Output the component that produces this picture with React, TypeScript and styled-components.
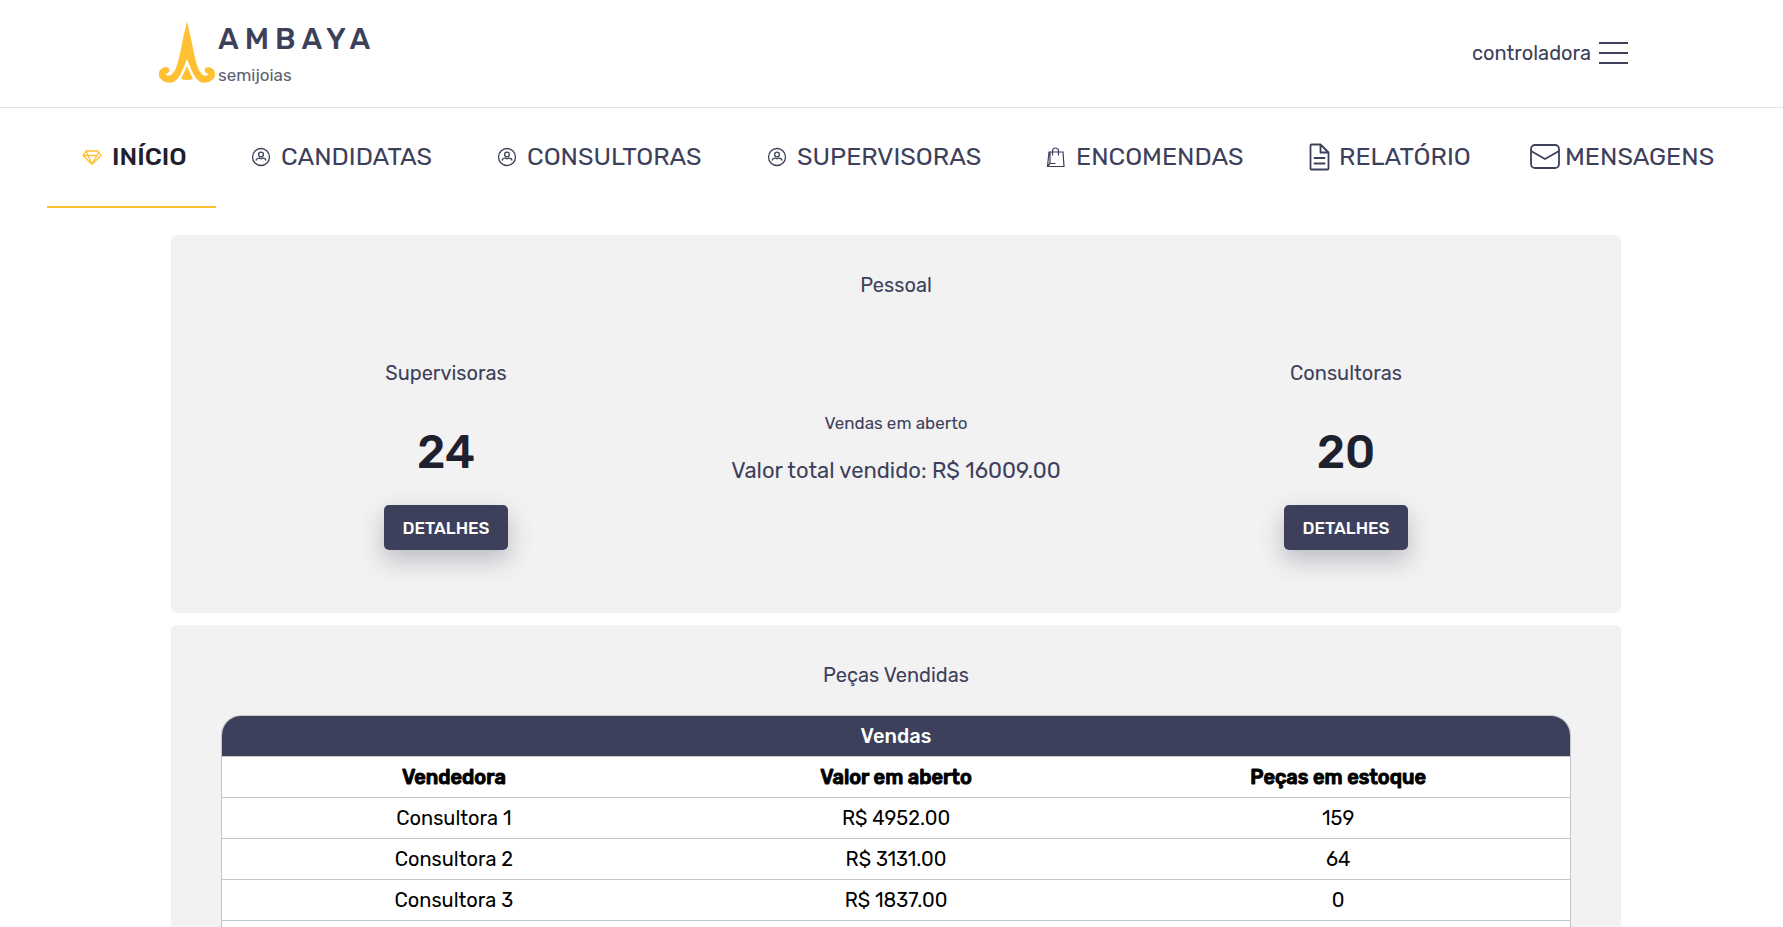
import React from "react";
import styled, { createGlobalStyle, css } from "styled-components";

const ink = "#3d405b";
const inkDark = "#1f202d";
const gold = "#ffc033";
const line = "#c1c8cc";

const GlobalStyle = createGlobalStyle`
  *, *::before, *::after { box-sizing: border-box; }
  body {
    margin: 0;
    background: #fff;
    color: ${ink};
    font-family: Rubik, Roboto, "Liberation Sans", sans-serif;
    font-size: 20px;
    line-height: 24px;
  }
`;

const Header = styled.header`
  display: flex;
  align-items: center;
  justify-content: space-between;
  height: 108px;
  padding: 0 155px 2px 159px;
  border-bottom: 1px solid #e4e4e4;
`;

const Brand = styled.a`
  display: flex;
  align-items: center;
  gap: 2px;
  color: ${ink};
  text-decoration: none;
`;

const BrandText = styled.span`
  display: flex;
  flex-direction: column;
  gap: 10px;
  padding-top: 2px;
`;

const BrandName = styled.span`
  font-size: 30px;
  font-weight: 500;
  line-height: 32px;
  letter-spacing: 6px;
`;

const BrandTag = styled.span`
  color: #5c6070;
  font-size: 17px;
  line-height: 20px;
`;

const MenuButton = styled.button`
  display: flex;
  align-items: center;
  gap: 8px;
  padding: 0;
  border: 0;
  background: none;
  color: ${ink};
  font: inherit;
  cursor: pointer;
`;

const Nav = styled.nav`
  display: grid;
  grid-template-columns: 169fr 246fr 270fr 279fr 263fr 226fr 236fr;
  padding: 0 47px;
`;

const NavLink = styled.a<{ $active?: boolean }>`
  display: flex;
  align-items: center;
  gap: 4px;
  height: 100px;
  padding: 0 0 0 29px;
  color: ${ink};
  font-size: 25px;
  text-decoration: none;
  white-space: nowrap;
  border-bottom: 2px solid transparent;
  ${(p) =>
    p.$active &&
    css`
      color: ${inkDark};
      font-weight: 500;
      border-color: ${gold};
    `}
`;

const IconSlot = styled.span<{ $gold?: boolean }>`
  display: flex;
  flex: none;
  justify-content: center;
  width: 32px;
  color: ${(p) => (p.$gold ? gold : ink)};
`;

const Main = styled.main`
  display: flex;
  flex-direction: column;
  gap: 12px;
  padding: 27px 162px 0 171px;
`;

const Panel = styled.section`
  padding: 38px 50px 63px;
  border-radius: 5px;
  background: #f2f2f2;
`;

const PanelTitle = styled.h2`
  margin: 0;
  font-size: 20px;
  font-weight: 400;
  line-height: 24px;
  text-align: center;
`;

const Stats = styled.div`
  display: grid;
  grid-template-columns: repeat(3, 1fr);
  align-items: center;
  margin-top: 64px;
`;

const Stat = styled.div`
  display: flex;
  flex-direction: column;
  align-items: center;
`;

const StatLabel = styled.h3`
  margin: 0;
  font-size: 20px;
  font-weight: 400;
  line-height: 24px;
`;

const StatValue = styled.strong`
  margin: 40px 0 24px;
  color: ${inkDark};
  font-size: 46px;
  font-weight: 500;
  line-height: 56px;
`;

const DetailsButton = styled.button`
  height: 45px;
  padding: 0 18px;
  border: 0;
  border-radius: 5px;
  background: ${ink};
  color: #fff;
  font: inherit;
  font-size: 17px;
  font-weight: 500;
  box-shadow: 0 10px 25px rgba(61, 64, 91, 0.3);
  cursor: pointer;
`;

const Sales = styled.div`
  display: flex;
  flex-direction: column;
  align-items: center;
  gap: 24px;
  padding-bottom: 14px;
`;

const SalesLabel = styled.span`
  font-size: 17px;
  line-height: 20px;
`;

const SalesTotal = styled.span`
  font-size: 22px;
  line-height: 28px;
`;

const TableFrame = styled.div`
  margin-top: 28px;
  border: 1px solid ${line};
  border-radius: 20px 20px 0 0;
  background: #fff;
  overflow: hidden;
`;

const Table = styled.table`
  width: 100%;
  border-spacing: 0;
  table-layout: fixed;
  color: #000;
  text-align: center;

  th, td {
    height: 41px;
    padding: 0;
    border-bottom: 1px solid ${line};
  }
`;

const Caption = styled.th`
  background: ${ink};
  color: #fff;
  font-weight: 500;
`;

const ColumnHead = styled.th`
  font-weight: 500;
  -webkit-text-stroke: 1px #000;
`;

const OuterCol = styled.col`
  width: 34.4%;
`;

const Logo = () => (
  <svg width="57" height="64" viewBox="0 0 57 64" fill="none" aria-hidden="true">
    <path
      d="M28 0C29 6 31.500 14 32.500 20C34.500 30 36 39 39 47C41 52 45 56 48 54.500C50 53.500 49.500 52 48 52.500C45 51 44.500 48 47.500 46.500C52 45 57 49 56 54.500C55 60 48 62.500 43 61.500C36 60 32 48 28 38C24 48 20 60 13 61.500C8 62.500 1 60 0 54.500C-1 49 4 45 8.500 46.500C11.500 48 11 51 8 52.500C6.500 52 6 53.500 8 54.500C11 56 15 52 17 47C20 39 21.500 30 23.500 20C24.500 14 27 6 28 0Z"
      fill={gold}
    />
    <path d="M28 45L34 58Q28 60 22 58Z" fill={gold} />
  </svg>
);

const Bars = () => (
  <svg width="29" height="24" viewBox="0 0 29 24" stroke="currentColor" strokeWidth="2" aria-hidden="true">
    <path d="M0 2H29M0 12H29M0 22H29" />
  </svg>
);

const Diamond = () => (
  <svg width="20" height="16" viewBox="0 0 20 16" fill="none" stroke="currentColor" strokeWidth="1.300" strokeLinejoin="round" aria-hidden="true">
    <path d="M4 2H16L19 6.500L10 15.200L1 6.500ZM1 6.500H15L16.500 3M4 2L6 6.500L10 15L15 6.500" />
  </svg>
);

const Person = () => (
  <svg width="20" height="20" viewBox="0 0 20 20" fill="none" stroke="currentColor" strokeWidth="1.300" aria-hidden="true">
    <circle cx="10" cy="10" r="8.500" />
    <circle cx="10" cy="7.500" r="2.400" />
    <path d="M5 13.500C5.500 11.500 7.500 11 8.500 11.200Q10 12.200 11.500 11.200C13 11 14.500 11.500 15 13.500" />
  </svg>
);

const Bag = () => (
  <svg width="20" height="22" viewBox="0 0 20 22" fill="none" stroke="currentColor" strokeWidth="1.200" aria-hidden="true">
    <path d="M3 6H17L18 20.500H1.500ZM6.500 9.500V5C6.500 1 12.500 1 12.500 5V9.500M4 6V17.500L1.500 20.500M4 17.500H9.500" />
  </svg>
);

const Report = () => (
  <svg width="22" height="28" viewBox="0 0 22 28" fill="none" stroke="currentColor" strokeWidth="1.800" strokeLinejoin="round" strokeLinecap="round" aria-hidden="true">
    <path d="M12.500 1.500H3.500Q2.500 1.500 2.500 2.500V25.500Q2.500 26.500 3.500 26.500H19.500Q20.500 26.500 20.500 25.500V9.500ZM12.500 1.500V9.500H20.500M6.500 15H16.500M6.500 20.500H16.500" />
  </svg>
);

const Envelope = () => (
  <svg width="32" height="28" viewBox="0 0 32 28" fill="none" stroke="currentColor" strokeWidth="1.800" strokeLinejoin="round" aria-hidden="true">
    <rect x="2" y="2" width="28" height="23" rx="4" />
    <path d="M2 8L16 16L30 8" />
  </svg>
);

const navItems = [
  { label: "INÍCIO", icon: Diamond, active: true },
  { label: "CANDIDATAS", icon: Person },
  { label: "CONSULTORAS", icon: Person },
  { label: "SUPERVISORAS", icon: Person },
  { label: "ENCOMENDAS", icon: Bag },
  { label: "RELATÓRIO", icon: Report },
  { label: "MENSAGENS", icon: Envelope },
];

const sales = [
  ["Consultora 1", "R$ 4952.00", "159"],
  ["Consultora 2", "R$ 3131.00", "64"],
  ["Consultora 3", "R$ 1837.00", "0"],
  ["", "", ""],
];

const PeopleStat = ({ label, value }: { label: string; value: number }) => (
  <Stat>
    <StatLabel>{label}</StatLabel>
    <StatValue>{value}</StatValue>
    <DetailsButton type="button">DETALHES</DetailsButton>
  </Stat>
);

export default function App() {
  return (
    <>
      <GlobalStyle />
      <Header>
        <Brand href="#">
          <Logo />
          <BrandText>
            <BrandName>AMBAYA</BrandName>
            <BrandTag>semijoias</BrandTag>
          </BrandText>
        </Brand>
        <MenuButton type="button">
          controladora
          <Bars />
        </MenuButton>
      </Header>
      <Nav>
        {navItems.map(({ label, icon: Icon, active }) => (
          <NavLink key={label} href="#" $active={active}>
            <IconSlot $gold={active}>
              <Icon />
            </IconSlot>
            {label}
          </NavLink>
        ))}
      </Nav>
      <Main>
        <Panel>
          <PanelTitle>Pessoal</PanelTitle>
          <Stats>
            <PeopleStat label="Supervisoras" value={24} />
            <Sales>
              <SalesLabel>Vendas em aberto</SalesLabel>
              <SalesTotal>Valor total vendido: R$ 16009.00</SalesTotal>
            </Sales>
            <PeopleStat label="Consultoras" value={20} />
          </Stats>
        </Panel>
        <Panel>
          <PanelTitle>Peças Vendidas</PanelTitle>
          <TableFrame>
            <Table>
              <colgroup>
                <OuterCol />
                <col />
                <OuterCol />
              </colgroup>
              <thead>
                <tr>
                  <Caption colSpan={3}>Vendas</Caption>
                </tr>
                <tr>
                  <ColumnHead>Vendedora</ColumnHead>
                  <ColumnHead>Valor em aberto</ColumnHead>
                  <ColumnHead>Peças em estoque</ColumnHead>
                </tr>
              </thead>
              <tbody>
                {sales.map(([seller, amount, stock], i) => (
                  <tr key={i}>
                    <td>{seller}</td>
                    <td>{amount}</td>
                    <td>{stock}</td>
                  </tr>
                ))}
              </tbody>
            </Table>
          </TableFrame>
        </Panel>
      </Main>
    </>
  );
}
